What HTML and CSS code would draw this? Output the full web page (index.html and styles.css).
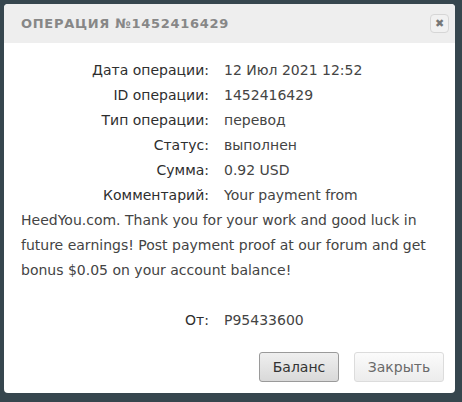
FILE: index.html
```html
<!DOCTYPE html>
<html lang="ru">
<head>
  <title>Операция</title>
  <meta name="viewport" content="width=device-width, initial-scale=1"/>
  <link rel="stylesheet" href="styles.css">
</head>

<body>
  <div class="dialog">
    <div class="dialog-head">
      <span class="dialog-title">Операция №1452416429</span>
      <button type="button" class="close-btn" title="Закрыть">&#x2716;</button>
    </div>
    <div class="dialog-body">
      <div class="row"><span class="label">Дата операции:</span>12 Июл 2021 12:52</div>
      <div class="row"><span class="label">ID операции:</span>1452416429</div>
      <div class="row"><span class="label">Тип операции:</span>перевод</div>
      <div class="row"><span class="label">Статус:</span>выполнен</div>
      <div class="row"><span class="label">Сумма:</span>0.92 USD</div>
      <div class="row"><span class="label">Комментарий:</span>Your payment from</div>
      <div class="row">HeedYou.com. Thank you for your work and good luck in future earnings! Post payment proof at our forum and get bonus $0.05 on your account balance!</div>
      <div class="row spaced"><span class="label">От:</span>P95433600</div>
    </div>
    <div class="dialog-foot">
      <button type="button" class="btn btn-main">Баланс</button>
      <button type="button" class="btn">Закрыть</button>
    </div>
  </div>
</body>
</html>
```
FILE: styles.css
```css
html, body {
  height: 100%;
  margin: 0;
  background-color: #36464e;
}
body {
  font-family: "DejaVu Sans", sans-serif;
  padding: 4px 7px 0 4px;
  box-sizing: border-box;
}

.dialog {
  background: #fff;
  border-radius: 4px;
  height: 389px;
  display: flex;
  flex-direction: column;
  overflow: hidden;
}

.dialog-head {
  background: #eeeeee;
  height: 39px;
  display: flex;
  align-items: center;
  justify-content: space-between;
  padding: 0 6px 0 17px;
}
.dialog-title {
  text-transform: uppercase;
  font-weight: bold;
  font-size: 13px;
  letter-spacing: 0.7px;
  color: #878787;
}
.close-btn {
  width: 19px;
  height: 19px;
  padding: 0;
  border: 1px solid #d6d6d6;
  border-radius: 4px;
  background: #f1f1f1;
  color: #777;
  font-size: 11px;
  line-height: 17px;
  font-family: "DejaVu Sans", sans-serif;
  cursor: pointer;
}

.dialog-body {
  flex: 1;
  padding: 15px 20px 0 17px;
  font-size: 14px;
  line-height: 25px;
  color: #444;
}
.row .label {
  display: inline-block;
  width: 188px;
  margin-right: 15px;
  text-align: right;
  white-space: nowrap;
  color: #2e2e2e;
}
.row.spaced {
  margin-top: 25px;
}

.dialog-foot {
  display: flex;
  justify-content: flex-end;
  gap: 15px;
  padding: 0 11px 11px 0;
}
.btn {
  height: 30px;
  min-width: 90px;
  padding: 0 12px;
  border: 1px solid #dcdcdc;
  border-radius: 3px;
  background: linear-gradient(#fbfbfb, #ececec);
  color: #6a6a6a;
  font-family: "DejaVu Sans", sans-serif;
  font-size: 14px;
}
.btn-main {
  min-width: 80px;
  border-color: #9a9a9a;
  background: linear-gradient(#efefef, #d9d9d9);
  color: #333;
}
```
